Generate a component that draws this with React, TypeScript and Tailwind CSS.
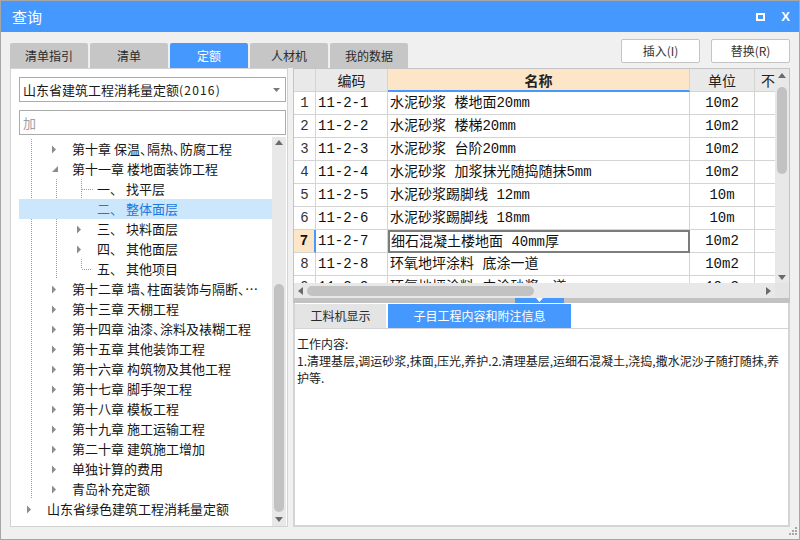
import React from "react";

type Cell = "" | "v" | "tee" | "ell" | "c" | "e";

const treeRows: { cells: Cell[]; label: string; sel?: boolean }[] = [
  { cells: ["v", "c"], label: "第十章 保温、隔热、防腐工程" },
  { cells: ["v", "e"], label: "第十一章 楼地面装饰工程" },
  { cells: ["v", "v", "tee"], label: "一、 找平层" },
  { cells: ["", "", ""], label: "二、 整体面层", sel: true },
  { cells: ["v", "v", "c"], label: "三、 块料面层" },
  { cells: ["v", "v", "c"], label: "四、 其他面层" },
  { cells: ["v", "v", "ell"], label: "五、 其他项目" },
  { cells: ["v", "c"], label: "第十二章 墙、柱面装饰与隔断、⋯" },
  { cells: ["v", "c"], label: "第十三章 天棚工程" },
  { cells: ["v", "c"], label: "第十四章 油漆、涂料及裱糊工程" },
  { cells: ["v", "c"], label: "第十五章 其他装饰工程" },
  { cells: ["v", "c"], label: "第十六章 构筑物及其他工程" },
  { cells: ["v", "c"], label: "第十七章 脚手架工程" },
  { cells: ["v", "c"], label: "第十八章 模板工程" },
  { cells: ["v", "c"], label: "第十九章 施工运输工程" },
  { cells: ["v", "c"], label: "第二十章 建筑施工增加" },
  { cells: ["v", "c"], label: "单独计算的费用" },
  { cells: ["v", "c"], label: "青岛补充定额" },
  { cells: ["c"], label: "山东省绿色建筑工程消耗量定额" },
];

const tableRows = [
  ["1", "11-2-1", "水泥砂浆 楼地面20mm", "10m2"],
  ["2", "11-2-2", "水泥砂浆 楼梯20mm", "10m2"],
  ["3", "11-2-3", "水泥砂浆 台阶20mm", "10m2"],
  ["4", "11-2-4", "水泥砂浆 加浆抹光随捣随抹5mm", "10m2"],
  ["5", "11-2-5", "水泥砂浆踢脚线 12mm", "10m"],
  ["6", "11-2-6", "水泥砂浆踢脚线 18mm", "10m"],
  ["7", "11-2-7", "细石混凝土楼地面 40mm厚", "10m2"],
  ["8", "11-2-8", "环氧地坪涂料 底涂一道", "10m2"],
  ["9", "11-2-9", "环氧地坪涂料 中涂砂浆一道", "10m2"],
];

function TreeCell({ t }: { t: Cell }) {
  return (
    <svg width="25" height="20" className="shrink-0 block">
      {(t === "v" || t === "tee") && (
        <line x1="9.5" y1="0" x2="9.5" y2="20" stroke="#9c9c9c" strokeDasharray="1 1" />
      )}
      {t === "tee" && (
        <line x1="10" y1="10.5" x2="22" y2="10.5" stroke="#9c9c9c" strokeDasharray="1 1" />
      )}
      {t === "ell" && (
        <>
          <line x1="9.5" y1="0" x2="9.5" y2="10" stroke="#9c9c9c" strokeDasharray="1 1" />
          <line x1="10" y1="10.5" x2="20" y2="10.5" stroke="#9c9c9c" strokeDasharray="1 1" />
        </>
      )}
      {t === "c" && <polygon points="5,6.5 9,10.5 5,14.5" fill="#8c8c8c" />}
      {t === "e" && <polygon points="11,7 11,13 5,13" fill="#8c8c8c" />}
    </svg>
  );
}

function Label({ text }: { text: string }) {
  // the comma-like 、 between two characters is drawn narrow in the reference font
  const parts: React.ReactNode[] = [];
  const chars = Array.from(text);
  let buf = "";
  chars.forEach((ch, i) => {
    if (ch === "、" && chars[i + 1] !== " ") {
      if (buf) parts.push(buf);
      buf = "";
      parts.push(
        <span key={i} className="tracking-[-6px]">
          、
        </span>
      );
    } else {
      buf += ch;
    }
  });
  if (buf) parts.push(buf);
  return <>{parts}</>;
}

function ArrowUp() {
  return (
    <svg width="8" height="5" className="block shrink-0">
      <polygon points="0,5 4,0 8,5" fill="#6a6a6a" />
    </svg>
  );
}
function ArrowDown() {
  return (
    <svg width="8" height="5" className="block shrink-0">
      <polygon points="0,0 8,0 4,5" fill="#6a6a6a" />
    </svg>
  );
}
function ArrowLeft() {
  return (
    <svg width="5" height="8" className="block shrink-0">
      <polygon points="5,0 0,4 5,8" fill="#6a6a6a" />
    </svg>
  );
}
function ArrowRight() {
  return (
    <svg width="5" height="8" className="block shrink-0">
      <polygon points="0,0 5,4 0,8" fill="#6a6a6a" />
    </svg>
  );
}

const tabs = ["清单指引", "清单", "定额", "人材机", "我的数据"];

export default function App() {
  return (
    <div className="w-[800px] h-[540px] border border-[#a6a6a6] bg-[#f0f0f0] flex flex-col relative overflow-hidden font-['Noto_Sans_CJK_SC','Noto_Sans',sans-serif] text-[#222]">
      {/* Title bar */}
      <div className="h-[31px] shrink-0 bg-[#4599fe] flex items-center justify-between pl-[11px] pr-[9px]">
        <span className="text-white text-[15px] leading-none">查询</span>
        <div className="flex items-center gap-[16px]">
          <div className="w-[9px] h-[8px] border-2 border-white"></div>
          <span className="text-white text-[13px] font-bold leading-none font-['Liberation_Sans',sans-serif]">X</span>
        </div>
      </div>

      {/* Tab strip */}
      <div className="h-[36px] shrink-0 flex items-end justify-between px-[9px]">
        <div className="flex gap-[2px]">
          {tabs.map((t) => (
            <div
              key={t}
              className={
                t === "定额"
                  ? "w-[78px] h-[25px] rounded-t-[2px] bg-[#4599fe] text-white text-[12px] flex items-center justify-center"
                  : "w-[78px] h-[25px] rounded-t-[2px] bg-[#c6c6c6] text-[#2a2a2a] text-[12px] flex items-center justify-center"
              }
            >
              {t}
            </div>
          ))}
        </div>
        <div className="flex gap-[11px] mb-[5px]">
          <div className="w-[79px] h-[24px] bg-white border border-[#c4c4c4] rounded-[2px] text-[12px] text-[#333] flex items-center justify-center">
            插入(I)
          </div>
          <div className="w-[79px] h-[24px] bg-white border border-[#c4c4c4] rounded-[2px] text-[12px] text-[#333] flex items-center justify-center">
            替换(R)
          </div>
        </div>
      </div>

      {/* Main */}
      <div className="flex-1 flex gap-[5px] px-[9px] pb-[12px] min-h-0">
        {/* Left panel */}
        <div className="w-[278px] shrink-0 border border-[#d2d2d2] bg-white flex flex-col min-h-0">
          <div className="mt-[8px] ml-[8px] mr-[1px] h-[25px] border border-[#ababab] flex items-center justify-between pl-[3px] pr-[5px]">
            <span className="text-[13px] leading-none text-[#1a1a1a] whitespace-nowrap">
              山东省建筑工程消耗量定额<span className="text-[12px] tracking-[1.2px]">(2016)</span>
            </span>
            <svg width="7" height="4" className="block">
              <polygon points="0,0 7,0 3.5,4" fill="#7a7a7a" />
            </svg>
          </div>
          <div className="mt-[8px] ml-[8px] mr-[1px] h-[25px] border border-[#ababab] flex items-center pl-[3px]">
            <span className="text-[13px] leading-none text-[#a0a0a0]">加</span>
          </div>
          <div className="mt-[2px] ml-[8px] mr-[1px] flex-1 flex min-h-0">
            <div className="flex-1 flex flex-col pt-[2px] overflow-hidden">
              {treeRows.map((r, i) => (
                <div
                  key={i}
                  className={r.sel ? "h-[20px] shrink-0 flex items-center pl-[3px] bg-[#cce6fc]" : "h-[20px] shrink-0 flex items-center pl-[3px]"}
                >
                  {r.cells.map((c, j) => (
                    <TreeCell key={j} t={c} />
                  ))}
                  <span
                    className={
                      r.sel
                        ? "text-[13px] leading-[20px] whitespace-pre text-[#1a78e0]"
                        : "text-[13px] leading-[20px] whitespace-pre text-[#161616]"
                    }
                  >
                    <Label text={r.label} />
                  </span>
                </div>
              ))}
            </div>
            <div className="w-[14px] shrink-0 bg-[#e8e8e8] flex flex-col items-center">
              <div className="mt-[3px]">
                <ArrowUp />
              </div>
              <div className="flex-1"></div>
              <div className="w-[10px] h-[228px] rounded-full bg-[#c2c2c2]"></div>
              <div className="mt-[5px] mb-[4px]">
                <ArrowDown />
              </div>
            </div>
          </div>
        </div>

        {/* Right panel */}
        <div className="flex-1 flex flex-col min-w-0">
          {/* Table block */}
          <div className="h-[230px] shrink-0 border-t border-x border-[#c4c4c4] bg-white flex flex-col">
            <div className="h-[214px] flex">
              <div className="flex-1 overflow-hidden font-['Liberation_Mono','Noto_Sans_CJK_SC',monospace] text-[14px] text-[#111]">
                {/* header */}
                <div className="flex h-[23px] font-['Noto_Sans_CJK_SC',sans-serif] text-[14px] text-[#222]">
                  <div className="w-[22px] shrink-0 border-r border-b border-[#d4d4d4] bg-[#e9e9e9]"></div>
                  <div className="w-[72px] shrink-0 border-r border-b border-[#d4d4d4] bg-[#e9e9e9] flex items-center justify-center leading-none">
                    编码
                  </div>
                  <div className="w-[302px] shrink-0 border-r border-b-2 border-r-[#d4d4d4] border-b-[#4599fe] bg-[#fde6c8] flex items-center justify-center leading-none font-bold">
                    名称
                  </div>
                  <div className="w-[65px] shrink-0 border-r border-b border-[#d4d4d4] bg-[#e9e9e9] flex items-center justify-center leading-none">
                    单位
                  </div>
                  <div className="w-[100px] shrink-0 border-r border-b border-[#d4d4d4] bg-[#e9e9e9] flex items-center pl-[6px] leading-none whitespace-nowrap">
                    不含税基价
                  </div>
                </div>
                {tableRows.map((r) => {
                  const sel = r[0] === "7";
                  return (
                    <div key={r[0]} className="flex h-[23px]">
                      <div
                        className={
                          sel
                            ? "w-[22px] shrink-0 border-b border-b-[#d4d4d4] border-r-2 border-r-[#4599fe] bg-[#fde6c8] flex items-center justify-center font-bold leading-none"
                            : "w-[22px] shrink-0 border-r border-b border-[#d4d4d4] bg-white flex items-center justify-center leading-none text-[#333]"
                        }
                      >
                        {r[0]}
                      </div>
                      <div className="w-[72px] shrink-0 border-r border-b border-[#d4d4d4] flex items-center pl-[2px] leading-none whitespace-nowrap">
                        {r[1]}
                      </div>
                      <div
                        className={
                          sel
                            ? "w-[302px] shrink-0 border-2 border-[#7c7c7c] flex items-center pl-[1px] leading-none whitespace-nowrap overflow-hidden"
                            : "w-[302px] shrink-0 border-r border-b border-[#d4d4d4] flex items-center pl-[2px] leading-none whitespace-nowrap overflow-hidden"
                        }
                      >
                        {r[2]}
                      </div>
                      <div className="w-[65px] shrink-0 border-r border-b border-[#d4d4d4] flex items-center justify-center leading-none">
                        {r[3]}
                      </div>
                      <div className="w-[100px] shrink-0 border-r border-b border-[#d4d4d4]"></div>
                    </div>
                  );
                })}
              </div>
              <div className="w-[14px] shrink-0 bg-[#e8e8e8] flex flex-col items-center">
                <div className="mt-[4px]">
                  <ArrowUp />
                </div>
                <div className="mt-[9px] w-[10px] h-[87px] rounded-full bg-[#c2c2c2]"></div>
                <div className="flex-1"></div>
                <div className="mb-[3px]">
                  <ArrowDown />
                </div>
              </div>
            </div>
            <div className="h-[16px] flex">
              <div className="flex-1 bg-[#e8e8e8] flex items-center pl-[4px] pr-[4px]">
                <ArrowLeft />
                <div className="ml-[4px] w-[227px] h-[10px] rounded-full bg-[#c2c2c2]"></div>
                <div className="flex-1"></div>
                <ArrowRight />
              </div>
              <div className="w-[14px] bg-[#e4e4e4]"></div>
            </div>
          </div>

          {/* Splitter */}
          <div className="h-[5px] shrink-0 bg-[#c2c2c2] flex pl-[222px]">
            <div className="w-[49px] h-full bg-[#4599fe] flex justify-center items-start">
              <svg width="7" height="4" className="block">
                <polygon points="0,0 7,0 3.5,4" fill="#ffffff" />
              </svg>
            </div>
          </div>

          {/* Bottom section */}
          <div className="flex-1 border-x-2 border-b-2 border-[#d4d4d4] bg-white flex flex-col min-h-0">
            <div className="h-[26px] shrink-0 flex items-end gap-[2px] border-b border-[#d4d4d4]">
              <div className="w-[91px] h-[24px] bg-[#e4e4e4] text-[12px] text-[#2a2a2a] flex items-center justify-center">
                工料机显示
              </div>
              <div className="w-[183px] h-[24px] bg-[#4599fe] text-[12px] text-white flex items-center justify-center">
                子目工程内容和附注信息
              </div>
            </div>
            <div className="pl-[2px] pt-[6px] text-[12px] leading-[17px] text-[#222]">
              <div>工作内容:</div>
              <div>
                1.清理基层,调运砂浆,抹面,压光,养护.2.清理基层,运细石混凝土,浇捣,撒水泥沙子随打随抹,养
                <br />
                护等.
              </div>
            </div>
          </div>
        </div>
      </div>

      {/* resize grip */}
      <svg width="10" height="10" className="absolute right-[1px] bottom-[3px]">
        <rect x="7" y="1" width="2" height="2" fill="#a8a8a8" />
        <rect x="4" y="4" width="2" height="2" fill="#a8a8a8" />
        <rect x="7" y="4" width="2" height="2" fill="#a8a8a8" />
        <rect x="1" y="7" width="2" height="2" fill="#a8a8a8" />
        <rect x="4" y="7" width="2" height="2" fill="#a8a8a8" />
        <rect x="7" y="7" width="2" height="2" fill="#a8a8a8" />
      </svg>
    </div>
  );
}
